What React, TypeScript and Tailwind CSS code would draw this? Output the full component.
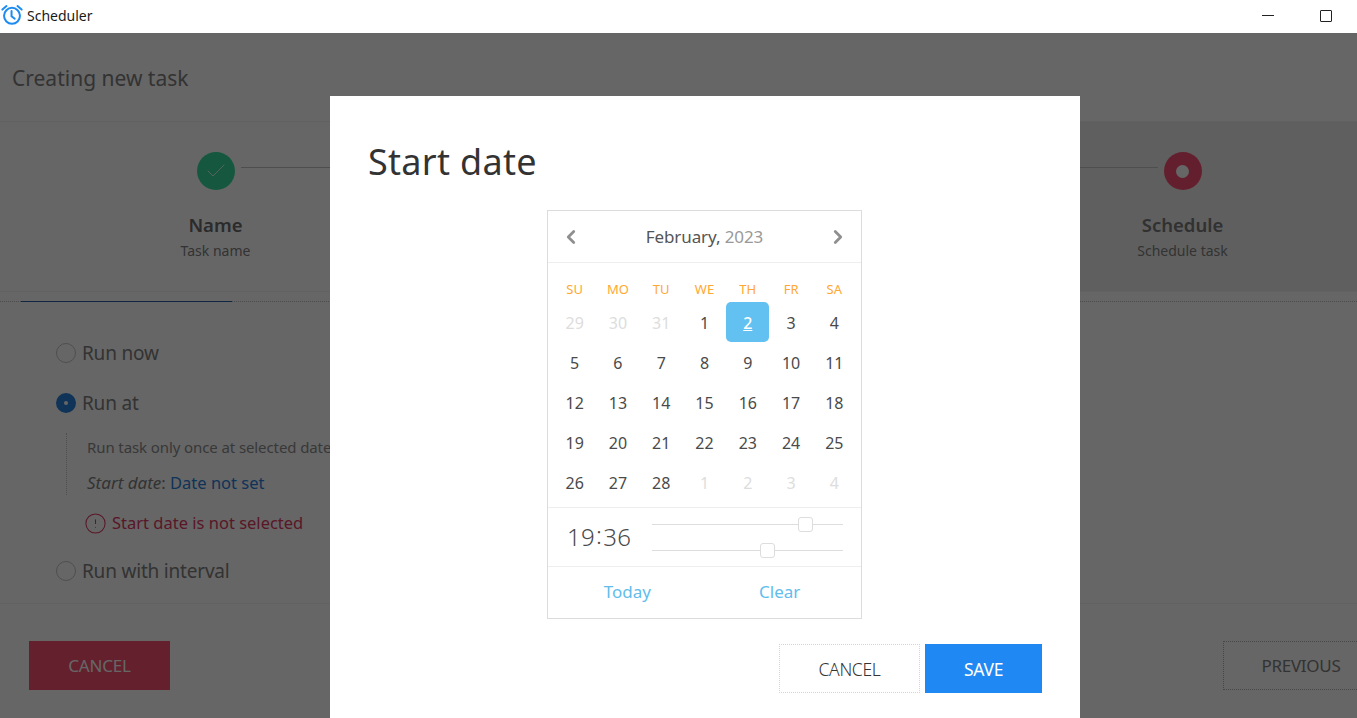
import { Check, ChevronLeft, ChevronRight, CircleAlert } from "lucide-react";

const ui = "font-['Noto_Sans','Open_Sans',sans-serif]";

const prevDays = [29, 30, 31];
const nextDays = [1, 2, 3, 4];
const days = Array.from({ length: 28 }, (_, i) => i + 1);

const Radio = ({ label, checked }: { label: string; checked?: boolean }) => (
  <div className="flex items-center gap-[6px] h-[26px]">
    {checked ? (
      <span className="w-5 h-5 rounded-full bg-[#2a7fdc] flex items-center justify-center">
        <span className="w-1 h-1 rounded-full bg-white" />
      </span>
    ) : (
      <span className="w-5 h-5 rounded-full border border-[#c4c4c4]" />
    )}
    <span className="text-[19px] tracking-[-0.2px] text-[#808080]">{label}</span>
  </div>
);

const Slider = ({ left }: { left: string }) => (
  <div className="relative h-px bg-[#dddddd]">
    <span className={`absolute -top-[7px] w-[15px] h-[15px] bg-white border border-[#dddddd] rounded-[3px] ${left}`} />
  </div>
);

const Calendar = () => (
  <div className="self-start ml-[217px] w-[315px] h-[409px] border border-[#dcdcdc] bg-white flex flex-col shrink-0 font-['Noto_Sans',sans-serif]">
    <div className="h-[52px] border-b border-[#eeeeee] flex items-center justify-between px-[12px] shrink-0">
      <ChevronLeft size={22} strokeWidth={3} className="text-[#8f8f8f]" />
      <div className="text-[17px] tracking-[-0.1px] text-[#555555]">
        February, <span className="text-[#999999]">2023</span>
      </div>
      <ChevronRight size={22} strokeWidth={3} className="text-[#8f8f8f]" />
    </div>
    <div className="px-[5px] grid grid-cols-7 auto-rows-[40px] pt-[13px] h-[244px] shrink-0 text-[16px] text-[#4a4a4a] [grid-template-rows:26px]">
      {["SU", "MO", "TU", "WE", "TH", "FR", "SA"].map((d) => (
        <div key={d} className="flex items-center justify-center pt-[1px] text-[13px] text-[#ffa733]">
          {d}
        </div>
      ))}
      {prevDays.map((d) => (
        <div key={`p${d}`} className="flex items-center justify-center pt-[1px] text-[#dddddd]">
          {d}
        </div>
      ))}
      {days.map((d) => (
        <div
          key={d}
          className={
            d === 2
              ? "flex items-center justify-center pt-[1px] rounded-[5px] bg-[#62c1f0] text-white underline font-medium"
              : "flex items-center justify-center pt-[1px]"
          }
        >
          {d}
        </div>
      ))}
      {nextDays.map((d) => (
        <div key={`n${d}`} className="flex items-center justify-center pt-[1px] text-[#dddddd]">
          {d}
        </div>
      ))}
    </div>
    <div className="h-[60px] border-y border-[#eeeeee] flex items-center pl-[19px] pr-[18px] shrink-0">
      <div className="w-[85px] text-[24px] font-light tracking-[0.3px] text-[#4a4a4a]">
        19<span className="relative -top-[2px] px-[1px]">:</span>36
      </div>
      <div className="flex-1 flex flex-col gap-[25px]">
        <Slider left="left-[146px]" />
        <Slider left="left-[108px]" />
      </div>
    </div>
    <div className="flex-1 grid grid-cols-2 text-[17px] text-[#62bdec]">
      <div className="flex items-center justify-center pb-[2px] pl-[2px]">Today</div>
      <div className="flex items-center justify-center pb-[2px] pr-[6px]">Clear</div>
    </div>
  </div>
);

export default function App() {
  return (
    <div className={`h-[718px] w-full overflow-hidden flex flex-col bg-white ${ui}`}>
      <div className="h-[33px] shrink-0 flex items-center bg-white relative z-20 pb-[2px]">
        <svg viewBox="0 0 24 24" className="w-[22px] h-[22px] ml-[1px] overflow-visible" fill="none" stroke="#1e8cf0" strokeWidth="2.2" strokeLinecap="round">
          <circle cx="12" cy="11.8" r="8.7" />
          <path d="M11.5 6.5v5.8l3.5 2.7" />
          <path d="M1.5 5 6 1.2" />
          <path d="M22.5 5 18 1.2" />
        </svg>
        <span className="ml-[4px] text-[14px] text-[#1a1a1a]">Scheduler</span>
        <div className="ml-auto flex items-center gap-[46px] pr-[25px]">
          <span className="w-3 h-px bg-[#222222]" />
          <span className="w-3 h-3 border border-[#222222] rounded-[1px]" />
        </div>
      </div>

      <div className="relative flex-1 flex flex-col min-h-0">
        <div className="h-[89px] shrink-0 border-b border-[#f2f2f2] flex items-center pl-3 pt-[3px]">
          <h1 className="text-[21px] text-[#808080]">Creating new task</h1>
        </div>

        <div className="h-[170px] shrink-0 flex border-b border-[#f4f4f4]">
          <div className="w-[431px] flex flex-col items-center pt-[30px]">
            <div className="relative w-[38px] h-[38px] rounded-full bg-[#37dc9e] flex items-center justify-center">
              <Check size={24} strokeWidth={0.8} className="text-white" />
              <span className="absolute left-[44px] top-[15px] w-[200px] h-px bg-[#c4c4c4]" />
            </div>
            <div className="mt-[22px] text-[18.5px] font-semibold leading-[26px] text-[#6b6b6b]">Name</div>
            <div className="mt-[2px] text-[14px] leading-[22px] text-[#808080]">Task name</div>
          </div>
          <div className="flex-1 bg-[#eeeeee]" />
          <div className="w-[349px] bg-[#eeeeee] flex flex-col items-center pt-[30px]">
            <div className="relative w-[38px] h-[38px] rounded-full bg-[#fa4f73] flex items-center justify-center">
              <span className="w-[13px] h-[13px] rounded-full bg-white" />
              <span className="absolute right-[44px] top-[15px] w-[200px] h-px bg-[#c4c4c4]" />
            </div>
            <div className="mt-[22px] text-[18.5px] font-semibold leading-[26px] text-[#7a7a7a]">Schedule</div>
            <div className="mt-[2px] text-[14px] leading-[22px] text-[#808080]">Schedule task</div>
          </div>
        </div>

        <div className="h-[10px] shrink-0 border-b border-dotted border-[#bbbbbb] relative">
          <span className="absolute left-[21px] bottom-[-1px] w-[211px] h-px bg-[#2a5fa8]" />
        </div>

        <div className="flex-1 min-h-0 pl-[56px] pt-[38px] border-b border-[#f4f4f4]">
          <Radio label="Run now" />
          <div className="mt-6">
            <Radio label="Run at" checked />
          </div>
          <div className="ml-[10px] mt-[17px] pt-[4px] pl-[20px] border-l border-dotted border-[#c4c4c4] h-[62px] w-[300px] whitespace-nowrap">
            <div className="text-[15px] leading-[20px] tracking-[-0.1px] text-[#8d8d8d]">
              Run task only once at selected date
            </div>
            <div className="mt-[15px] text-[16.5px] leading-[22px] text-[#808080]">
              <i className="text-[17px]">Start date</i>: <span className="text-[#2a7fdc]">Date not set</span>
            </div>
          </div>
          <div className="ml-[28px] mt-[16px] flex items-center gap-[5px] text-[16.5px] leading-[24px] text-[#e03a62]">
            <CircleAlert size={23} strokeWidth={1.1} />
            Start date is not selected
          </div>
          <div className="mt-[23px]">
            <Radio label="Run with interval" />
          </div>
        </div>

        <div className="h-[114px] shrink-0 flex items-start justify-between pl-[29px] pt-[37px]">
          <button className="w-[141px] h-[49px] bg-[#fa5072] text-[17px] text-white tracking-[-0.2px]">CANCEL</button>
          <button className="w-[156px] h-[49px] shrink-0 -mr-[22px] border border-dotted border-[#b0b0b0] text-[17px] text-[#808080] tracking-[-0.3px]">PREVIOUS</button>
        </div>

        <div className="absolute inset-0 bg-black/60 z-10 flex justify-start items-start pt-[63px] pl-[330px]">
          <div className="w-[750px] h-[640px] shrink-0 bg-white flex flex-col items-center">
            <div className="w-full pl-[38px] pt-[34px] h-[114px] shrink-0">
              <h2 className="text-[36px] leading-[64px] tracking-[0.3px] text-[#333333]">Start date</h2>
            </div>
            <Calendar />
            <div className="w-full flex justify-end gap-[5px] pr-[38px] mt-[25px]">
              <button className="w-[141px] h-[49px] pt-[1px] border border-dotted border-[#d4d4d4] text-[17.5px] font-light tracking-[-0.3px] text-[#333333]">CANCEL</button>
              <button className="w-[117px] h-[49px] pt-[1px] bg-[#1f88f2] text-[17.5px] tracking-[-0.3px] text-white">SAVE</button>
            </div>
          </div>
        </div>
      </div>
    </div>
  );
}
